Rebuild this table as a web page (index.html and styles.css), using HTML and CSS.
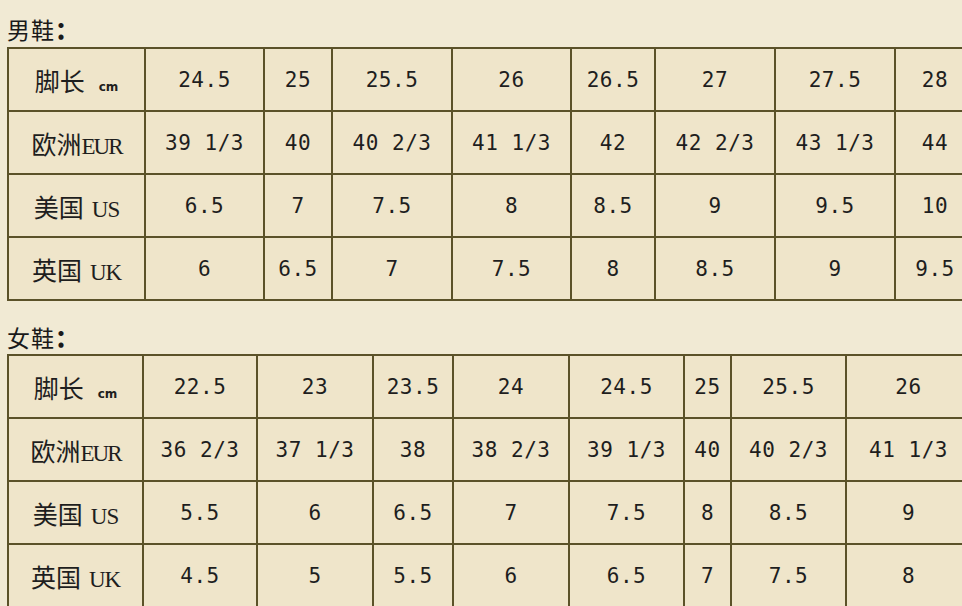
FILE: index.html
```html
<!DOCTYPE html>
<html lang="zh">
<head>
<meta charset="utf-8">
<title>鞋码对照表</title>
<link rel="stylesheet" href="styles.css">
</head>
<body>
<div class="page">
  <h2 class="title first">男鞋<span class="colon">：</span></h2>
  <table class="size-table men">
    <colgroup>
      <col style="width:137px"><col style="width:119px"><col style="width:68px"><col style="width:120px"><col style="width:119px"><col style="width:84px"><col style="width:120px"><col style="width:120px"><col style="width:80px">
    </colgroup>
    <tr><th><span class="cn">脚长</span> <span class="cm">cm</span></th><td>24.5</td><td>25</td><td>25.5</td><td>26</td><td>26.5</td><td>27</td><td>27.5</td><td>28</td></tr>
    <tr><th><span class="cn">欧洲</span><span class="lat eur">EUR</span></th><td>39 1/3</td><td>40</td><td>40 2/3</td><td>41 1/3</td><td>42</td><td>42 2/3</td><td>43 1/3</td><td>44</td></tr>
    <tr><th><span class="cn">美国</span> <span class="lat">US</span></th><td>6.5</td><td>7</td><td>7.5</td><td>8</td><td>8.5</td><td>9</td><td>9.5</td><td>10</td></tr>
    <tr><th><span class="cn">英国</span> <span class="lat">UK</span></th><td>6</td><td>6.5</td><td>7</td><td>7.5</td><td>8</td><td>8.5</td><td>9</td><td>9.5</td></tr>
  </table>
  <h2 class="title second">女鞋<span class="colon">：</span></h2>
  <table class="size-table women">
    <colgroup>
      <col style="width:135px"><col style="width:114px"><col style="width:116px"><col style="width:80px"><col style="width:116px"><col style="width:115px"><col style="width:47px"><col style="width:115px"><col style="width:125px">
    </colgroup>
    <tr><th><span class="cn">脚长</span> <span class="cm">cm</span></th><td>22.5</td><td>23</td><td>23.5</td><td>24</td><td>24.5</td><td>25</td><td>25.5</td><td>26</td></tr>
    <tr><th><span class="cn">欧洲</span><span class="lat eur">EUR</span></th><td>36 2/3</td><td>37 1/3</td><td>38</td><td>38 2/3</td><td>39 1/3</td><td>40</td><td>40 2/3</td><td>41 1/3</td></tr>
    <tr><th><span class="cn">美国</span> <span class="lat">US</span></th><td>5.5</td><td>6</td><td>6.5</td><td>7</td><td>7.5</td><td>8</td><td>8.5</td><td>9</td></tr>
    <tr><th><span class="cn">英国</span> <span class="lat">UK</span></th><td>4.5</td><td>5</td><td>5.5</td><td>6</td><td>6.5</td><td>7</td><td>7.5</td><td>8</td></tr>
  </table>
</div>
</body>
</html>
```
FILE: styles.css
```css
html, body {
  margin: 0;
  padding: 0;
  background: #f1ead4;
  overflow: hidden;
  width: 962px;
  height: 606px;
}
.page {
  padding-left: 7px;
  width: 1100px;
}
.title {
  margin: 0;
  font-family: "Noto Sans CJK SC", sans-serif;
  font-weight: 400;
  font-size: 23px;
  line-height: 26px;
  color: #1a1a1a;
  letter-spacing: 1px;
}
.colon {
  font-weight: 900;
  font-size: 24px;
}
.title.first {
  padding-top: 16px;
  margin-bottom: 5px;
}
.title.second {
  margin-top: 23px;
  margin-bottom: 4px;
}
.size-table {
  border-collapse: collapse;
  table-layout: fixed;
  background: #efe5ca;
}
.size-table.men { width: 967px; }
.size-table.women { width: 963px; }
.size-table th,
.size-table td {
  border: 2px solid #5b5229;
  height: 61px;
  padding: 0;
  text-align: center;
  vertical-align: middle;
  white-space: nowrap;
  color: #1e1e1e;
}
.size-table td {
  font-family: "DejaVu Sans Mono", monospace;
  font-size: 21px;
  letter-spacing: 0.5px;
}
.size-table th {
  font-weight: 400;
}
.cn {
  font-family: "Noto Sans CJK SC", sans-serif;
  font-size: 25px;
}
.cm {
  font-family: "DejaVu Sans", sans-serif;
  font-weight: 700;
  font-size: 12px;
  margin-left: 10px;
}
.lat {
  font-family: "Liberation Serif", serif;
  font-size: 23px;
  margin-left: 4px;
  letter-spacing: -1px;
}
.lat.eur {
  margin-left: 0;
  letter-spacing: -2px;
}
```
